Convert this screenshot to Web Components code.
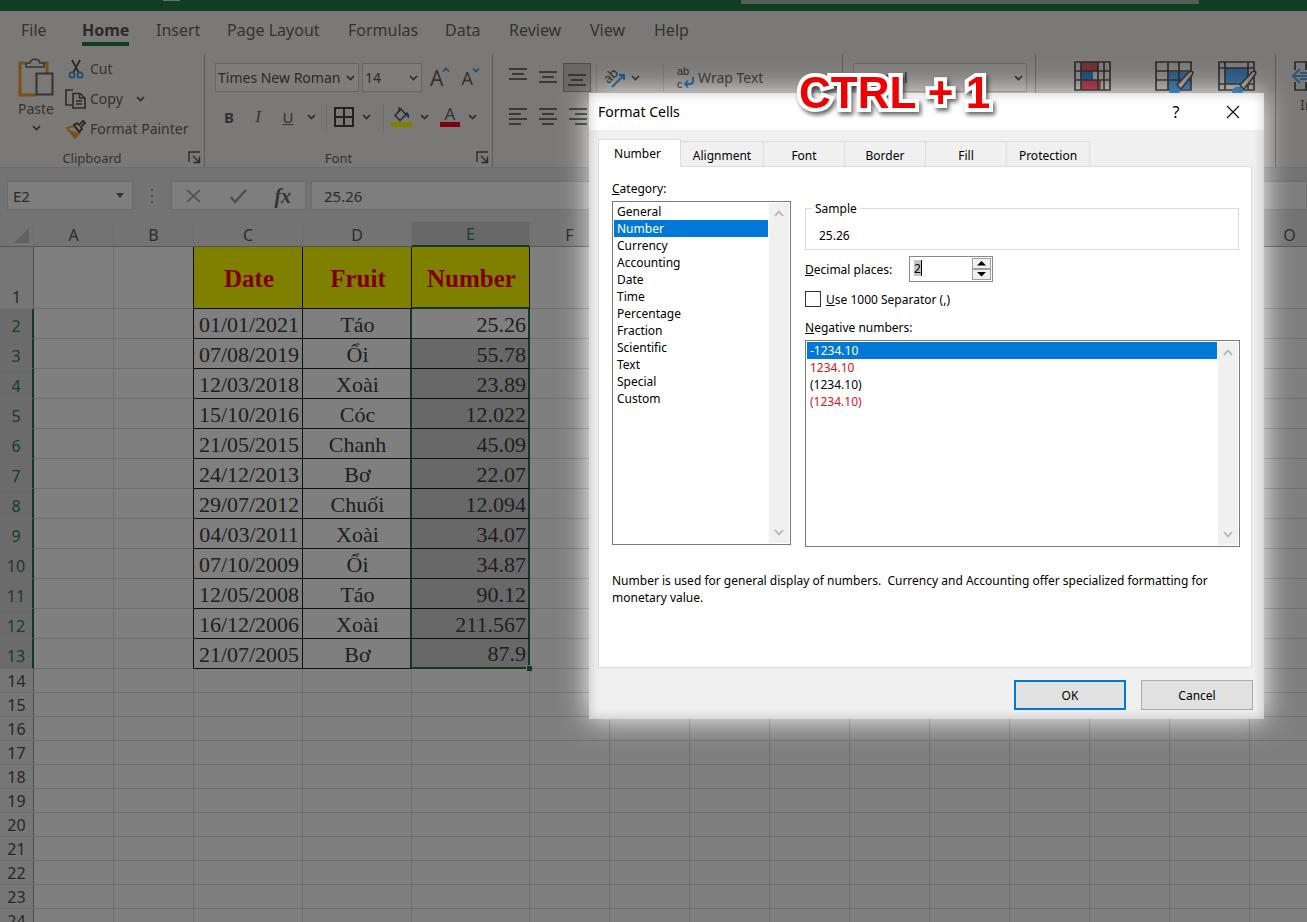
<!DOCTYPE html>
<html lang="en">
<head>
<meta charset="utf-8">
<title>Excel - Format Cells</title>
<style>
  html, body { margin: 0; height: 100%; overflow: hidden; }
  body { font-family: "Noto Sans", sans-serif; color: #555; background: #fff; }
</style>
</head>
<body>
<excel-app></excel-app>
<script>
const define = (name, html, setup) => {
  const tpl = document.createElement('template');
  tpl.innerHTML = html;
  customElements.define(name, class extends HTMLElement {
    constructor() {
      super();
      this.attachShadow({ mode: 'open' }).append(tpl.content.cloneNode(true));
    }
    connectedCallback() { if (setup) setup(this, this.shadowRoot); }
  });
};

/* ---------- icons ---------- */
const ICONS = {
  paste: [36, 40, '<path d="M7 5H2v32h16M24 5h5v10" fill="none" stroke="#f0a030" stroke-width="3"/><path d="M8 9V5h4c1-5 9-5 10 0h4v4z" fill="#f6f3f0" stroke="#666" stroke-width="1.6"/><rect x="18.500" y="15.500" width="16" height="21" fill="#f6f3f0" stroke="#666" stroke-width="2"/>'],
  cut: [16, 20, '<path d="M4 1l7 13M12 1L5 14" stroke="#555" stroke-width="1.8" fill="none"/><circle cx="4" cy="16" r="2.600" fill="none" stroke="#3a96dd" stroke-width="1.800"/><circle cx="12" cy="16" r="2.600" fill="none" stroke="#3a96dd" stroke-width="1.800"/>'],
  copy: [21, 20, '<path d="M7 16H1V1h7M8 4.500h7l5 4.500v10H8z" fill="none" stroke="#555" stroke-width="1.600"/><path d="M14.500 4.500V9H20M11 12h6M11 15h6" fill="none" stroke="#555" stroke-width="1.300"/>'],
  painter: [20, 20, '<path d="M1 9l7-2 6 6-5 6z" fill="none" stroke="#f0a030" stroke-width="2"/><path d="M3 11l9 3-3 4z" fill="#f0a030"/><path d="M8 6l3-2 2 2 4-4 2 2-4 4 1 2-3 3z" fill="none" stroke="#444" stroke-width="1.700"/>'],
  chev: [9, 6, '<path d="M1 1l3.500 3.500L8 1" fill="none" stroke="#555" stroke-width="1.700"/>'],
  launch: [13, 13, '<path d="M1 11V1h11M5 5l6 6M11.500 5.500v6h-6" fill="none" stroke="#555" stroke-width="1.400"/>'],
  borders: [20, 20, '<path d="M1 1h18v18H1zM10 1v18M1 10h18" fill="none" stroke="#444" stroke-width="2"/>'],
  fill: [21, 20, '<path d="M10 2L4 8.500l5 5 6-6-5-5zM8 5V0" fill="none" stroke="#555" stroke-width="1.500"/><path d="M15 5c3 1 4 4 2.500 6.500L15 8z" fill="#2b6cb0"/><path d="M0 15h21v5H0z" fill="#ffff00"/>'],
  orient: [22, 22, '<text x="0" y="13" font-size="13" fill="#555" transform="rotate(-45 7 11)" font-family="Noto Sans, sans-serif">ab</text><path d="M7 20L19 8M14 8h5v5" fill="none" stroke="#3a96dd" stroke-width="1.800"/>'],
  wrap: [19, 20, '<g font-size="11" fill="#555" font-family="Liberation Sans, sans-serif"><text x="1" y="7">ab</text><text x="1" y="20">c</text></g><path d="M17 9v4q0 3-3 3H9M12 12.500L9 16l3 3.500" fill="none" stroke="#3a96dd" stroke-width="1.800"/>'],
  cond: [37, 30, '<path d="M7 1h17v9H7zM7 19h20v10H7z" fill="#f0596a"/><path d="M7 10h12v9H7z" fill="#3a96dd"/><path d="M1 1h35v28H1zM7 1v28M24 1v28M30 1v28M1 10h35M1 19h35" fill="none" stroke="#555" stroke-width="1.700"/>'],
  fmt: [38, 33, '<path d="M13 11h23v17H13z" fill="#58aaf0"/><path d="M1 1h35v28H1zM13 1v28M24 1v28M1 10h35M1 19h35" fill="none" stroke="#555" stroke-width="1.700"/><path d="M14 33c0-6 4-9 8-7l12-14c2-2 5-1 3 2L26 29c-1 3-4 4-7 4z" fill="#58aaf0"/><path d="M22 24L34 11c3-2 5 0 3 3L26 28z" fill="#f6f3f0" stroke="#555" stroke-width="1.500"/>'],
  style: [38, 33, '<path d="M7 7h23v16H7z" fill="#58aaf0"/><path d="M1 1h35v28H1zM7 1v28M30 1v28M1 7h35M1 23h35" fill="none" stroke="#555" stroke-width="1.700"/><path d="M14 33c0-6 4-9 8-7l12-14c2-2 5-1 3 2L26 29c-1 3-4 4-7 4z" fill="#58aaf0"/><path d="M22 24L34 11c3-2 5 0 3 3L26 28z" fill="#f6f3f0" stroke="#555" stroke-width="1.500"/>'],
  insert: [34, 30, '<path d="M3 9V1h30v28H3v-8M14 1v8M14 21v8" fill="none" stroke="#555" stroke-width="1.700"/><path d="M0 15h30M8 8l-7 7 7 7M8 12h22M8 18h22" fill="none" stroke="#58aaf0" stroke-width="2"/>'],
  cancel: [16, 14, '<path d="M1 1l13 12M14 1L1 13" stroke="#9a9a9a" stroke-width="1.700"/>'],
  check: [17, 14, '<path d="M1 8l4 5L16 1" fill="none" stroke="#9a9a9a" stroke-width="2.200"/>'],
  tri: [8, 5, '<path d="M0 0h8L4 5z" fill="#666"/>'],
  triDown: [9, 5, '<path d="M0 0h9L4.500 4.500z" fill="#000"/>'],
  triUp: [9, 5, '<path d="M0 4.500h9L4.500 0z" fill="#000"/>'],
  sbUp: [10, 7, '<path d="M1 6l4-4.500L9 6" fill="none" stroke="#b4b4b4" stroke-width="1.800"/>'],
  sbDown: [10, 7, '<path d="M1 1l4 4.500L9 1" fill="none" stroke="#b4b4b4" stroke-width="1.800"/>'],
  close: [14, 14, '<path d="M1 1l12 12M13 1L1 13" stroke="#111" stroke-width="1.200"/>'],
  dots: [3, 14, '<path d="M0 0h2v2H0zM0 6h2v2H0zM0 12h2v2H0z" fill="#999"/>'],
  corner: [15, 15, '<path d="M15 0v15H0z" fill="#c4c4c4"/>'],
  caretUp: [6, 4, '<path d="M0 3.500L3 .500l3 3" fill="none" stroke="#3a96dd" stroke-width="1.700"/>'],
  caretDown: [6, 4, '<path d="M0 .500l3 3 3-3" fill="none" stroke="#3a96dd" stroke-width="1.700"/>']
};
const bars = (widths, align) => widths.map((w, i) => {
  const x = align === 'l' ? 0 : align === 'r' ? 18 - w : (18 - w) / 2;
  return `<path d="M${x} ${1 + i * 5}h${w}" stroke="#555" stroke-width="1.600"/>`;
}).join('');
ICONS.three = [18, 13, bars([18, 12, 18], 'c')];
ICONS.left = [18, 18, bars([18, 12, 18, 12], 'l')];
ICONS.center = [18, 18, bars([18, 12, 18, 12], 'c')];
ICONS.right = [18, 18, bars([18, 12, 18, 12], 'r')];

define('x-icon', `<style>:host{display:inline-flex;flex:none}svg{display:block;overflow:visible}</style><svg aria-hidden="true"></svg>`,
  (el, root) => {
    const [w, h, body] = ICONS[el.getAttribute('name')];
    const svg = root.querySelector('svg');
    svg.setAttribute('width', w);
    svg.setAttribute('height', h);
    svg.setAttribute('viewBox', `0 0 ${w} ${h}`);
    svg.innerHTML = body;
  });

/* ---------- title bar ---------- */
define('title-bar', `<style>
  :host{display:grid;grid-template-columns:163px 17px 561px 458px 1fr;height:11px;background:#247a4b;flex:none}
  .q{grid-column:2;height:1px;background:#cfe6d8}
  .s{grid-column:4;height:4px;background:#a0bcab}
</style><span class="q"></span><span class="s"></span>`);

/* ---------- ribbon tabs ---------- */
define('ribbon-tabs', `<style>
  :host{display:grid;grid-template-columns:61px 74px 71px 121px 97px 64px 81px 64px auto;height:39px;padding-left:21px;flex:none}
  ::slotted(a){justify-self:start;font-size:16px;line-height:20px;height:24px;margin-top:9px;color:#666;text-decoration:none;white-space:nowrap}
  ::slotted(a[aria-current]){font-weight:700;color:#555;border-bottom:4px solid #247a4b;height:22px}
</style><slot></slot>`);

/* ---------- ribbon group ---------- */
define('ribbon-group', `<style>
  :host{display:grid;grid-template-rows:94px 19px;box-sizing:border-box;height:113px;border-right:1px solid #b8b5b3;flex:none}
  .body{padding:0 10px;display:flex;min-width:0}
  .foot{display:grid;grid-template-columns:1fr auto;align-items:center;font-size:13px;line-height:18px;text-align:center;padding:0 3px 0 0;color:#666}
  .t{margin-right:4px}
</style><div class="body"><slot></slot></div><div class="foot"><span class="t"></span><slot name="launch"></slot></div>`,
  (el, root) => { root.querySelector('.t').textContent = el.getAttribute('label') || ''; });

/* ---------- drop-down box ---------- */
define('combo-box', `<style>
  :host{display:block;box-sizing:border-box;height:29px}
  label{position:relative;display:flex;align-items:center;height:100%;box-sizing:border-box;border:1px solid #cfccca;background:#fcfaf8}
  select{appearance:none;border:0;background:none;font:14px/20px "Noto Sans",sans-serif;color:#555;width:100%;padding:0 0 0 2px;outline:0}
  x-icon{position:absolute;right:3px}
</style><label><select></select><x-icon name="chev"></x-icon></label>`,
  (el, root) => {
    const s = root.querySelector('select');
    s.setAttribute('aria-label', el.getAttribute('label'));
    s.add(new Option(el.getAttribute('value')));
  });

/* ---------- ribbon ---------- */
define('excel-ribbon', `<style>
  :host{display:block;background:#f6f3f0;flex:none}
  .groups{display:flex;height:118px;padding-top:4px;box-sizing:border-box;border-bottom:1px solid #dedbd9}
  button{font:15px/20px "Noto Sans",sans-serif;color:#666;background:none;border:0;padding:0;display:flex;align-items:center;white-space:nowrap}
  .clip{width:205px}.font{width:288px}.align{width:350px}.num{width:193px}.styles{width:240px}
  .paste{flex-direction:column;width:52px;font-size:14px;gap:1px;padding-top:4px;justify-content:flex-start;box-sizing:border-box}
  .paste x-icon:last-child{margin-top:5px}
  .ins{width:auto;padding:7px 0 0 6px;align-items:flex-start}
  .ins x-icon{margin-bottom:3px}
  .ins span{margin-left:8px}
  .stack{display:grid;grid-template-rows:30px 30px 30px;align-items:center;font-size:14px;margin-left:3px}
  .stack button{font-size:14px;height:28px}
  .stack x-icon:first-child{width:21px;justify-content:center;margin-right:4px}
  .copy{gap:0}.copy x-icon:last-child{margin-left:13px}
  .rows{display:grid;grid-template-rows:29px 29px;row-gap:10px;padding-top:9px;align-items:center;align-content:start;box-sizing:border-box}
  .r{display:flex;align-items:center;height:29px}
  .sep{width:1px;height:28px;background:#dddad8}
  .g button{justify-content:center}
  .icon{width:30px}
  .pressed{width:28px;height:29px;border:1px solid #999;background:#d0cdcb;box-sizing:border-box;margin:0 1px 0 0}
  .big{font-size:21px;align-items:flex-start;gap:0}
  .small{font-size:18px}
  .bar{display:flex;flex-direction:column;align-items:center;width:20px;font-size:17px;line-height:16px;border-bottom:5px solid #ff0020;height:16px}
</style>
<ribbon-tabs>
  <a href="#file">File</a><a href="#home" aria-current="page">Home</a><a href="#insert">Insert</a><a href="#layout">Page Layout</a><a href="#formulas">Formulas</a><a href="#data">Data</a><a href="#review">Review</a><a href="#view">View</a><a href="#help">Help</a>
</ribbon-tabs>
<div class="groups">
  <ribbon-group class="clip" label="Clipboard">
    <button class="paste"><x-icon name="paste"></x-icon>Paste<x-icon name="chev"></x-icon></button>
    <div class="stack">
      <button><x-icon name="cut"></x-icon>Cut</button>
      <button class="copy"><x-icon name="copy"></x-icon>Copy<x-icon name="chev"></x-icon></button>
      <button><x-icon name="painter"></x-icon>Format Painter</button>
    </div>
    <x-icon slot="launch" name="launch"></x-icon>
  </ribbon-group>
  <ribbon-group class="font" label="Font">
    <div class="rows">
      <div class="r">
        <combo-box style="width:144px" label="Font" value="Times New Roman"></combo-box>
        <combo-box style="width:60px;margin-left:3px" label="Font size" value="14"></combo-box>
        <button class="big" aria-label="Increase font size" style="margin-left:8px">A<x-icon name="caretUp"></x-icon></button>
        <button class="big small" aria-label="Decrease font size" style="margin-left:12px">A<x-icon name="caretDown"></x-icon></button>
      </div>
      <div class="r g">
        <button style="width:28px"><b>B</b></button><button class="icon"><i style="font-family:'Liberation Serif',serif;font-size:17px">I</i></button><button class="icon"><u>U</u></button><button aria-label="Underline styles" style="width:16px"><x-icon name="chev"></x-icon></button>
        <span class="sep" style="margin:0 7px"></span>
        <button aria-label="Borders" style="width:20px"><x-icon name="borders"></x-icon></button><button aria-label="Border styles" style="width:25px"><x-icon name="chev"></x-icon></button>
        <span class="sep" style="margin:0 7px 0 4px"></span>
        <button aria-label="Fill colour" style="width:21px"><x-icon name="fill"></x-icon></button><button aria-label="Fill colours" style="width:24px"><x-icon name="chev"></x-icon></button>
        <button style="margin-left:4px"><span class="bar">A</span></button><button aria-label="Font colours" style="width:24px"><x-icon name="chev"></x-icon></button>
      </div>
    </div>
    <x-icon slot="launch" name="launch"></x-icon>
  </ribbon-group>
  <ribbon-group class="align">
    <div class="rows">
      <div class="r g">
        <button class="icon" aria-label="Top align" style="padding-bottom:6px"><x-icon name="three"></x-icon></button><button class="icon" aria-label="Middle align"><x-icon name="three"></x-icon></button><button class="pressed" aria-label="Bottom align" style="padding-top:6px"><x-icon name="three"></x-icon></button>
        <span class="sep" style="margin:0 8px 0 4px"></span>
        <button aria-label="Orientation"><x-icon name="orient"></x-icon></button><button aria-label="Orientation angles" style="width:16px"><x-icon name="chev"></x-icon></button>
        <span class="sep" style="margin:0 12px 0 20px"></span>
        <button style="gap:3px;font-size:14px"><x-icon name="wrap"></x-icon>Wrap Text</button>
      </div>
      <div class="r g">
        <button class="icon" aria-label="Align left"><x-icon name="left"></x-icon></button><button class="icon" aria-label="Centre"><x-icon name="center"></x-icon></button><button class="icon" aria-label="Align right"><x-icon name="right"></x-icon></button>
      </div>
    </div>
  </ribbon-group>
  <ribbon-group class="num">
    <div class="rows"><combo-box style="width:174px" label="Number format" value="General"></combo-box></div>
  </ribbon-group>
  <ribbon-group class="styles">
    <div class="r" style="align-items:flex-start;padding:7px 0 0 28px">
      <button aria-label="Conditional Formatting"><x-icon name="cond"></x-icon></button>
      <button aria-label="Format as Table" style="margin-left:44px"><x-icon name="fmt"></x-icon></button>
      <button aria-label="Cell Styles" style="margin-left:25px"><x-icon name="style"></x-icon></button>
    </div>
  </ribbon-group>
  <ribbon-group class="cells">
    <button class="paste ins"><x-icon name="insert"></x-icon><span>Insert</span></button>
  </ribbon-group>
</div>`);

/* ---------- formula bar ---------- */
define('formula-bar', `<style>
  :host{display:flex;height:54px;box-sizing:border-box;padding:13px 0 12px 7px;background:#e6e6e6;align-items:stretch;flex:none}
  input{font:15px/20px "Noto Sans",sans-serif;color:#555;border:0;background:none;padding:0;outline:0;min-width:0;width:100%}
  label,.fx{display:flex;align-items:center;background:#fcfcfc;border:1px solid #d6d6d6;box-sizing:border-box}
  .name{width:126px;padding:0 8px 0 5px}
  .dots{width:38px;display:flex;align-items:center;justify-content:center}
  .fx{width:135px;justify-content:space-around;margin-right:5px}
  .fx button{border:0;background:none;padding:0;display:flex;color:#666;font:italic 700 20px/24px "Liberation Serif",serif}
  .val{flex:1;padding-left:12px}
</style>
<label class="name"><input aria-label="Name box" value="E2"><x-icon name="tri"></x-icon></label>
<span class="dots"><x-icon name="dots"></x-icon></span>
<div class="fx"><button aria-label="Cancel"><x-icon name="cancel"></x-icon></button><button aria-label="Enter"><x-icon name="check"></x-icon></button><button>fx</button></div>
<label class="val"><input aria-label="Formula" value="25.26"></label>`);

/* ---------- sheet ---------- */
define('sheet-grid', `<style>
  :host{display:block;flex:1;min-height:0;overflow:hidden;background:#fff}
  table{border-collapse:separate;border-spacing:0;table-layout:fixed;width:1330px}
  th,td{padding:0;box-sizing:border-box;border-right:1px solid #dcdcdc;border-bottom:1px solid #dcdcdc;font-weight:400;overflow:hidden;white-space:nowrap}
  thead th{height:25px;background:#e6e6e6;font-size:16px;line-height:22px;padding-top:1px;border-bottom-color:#a8a8a8;color:#585858}
  thead th.on{background:#d0d0d0;color:#2f7d55;border-bottom:2px solid #217346}
  thead th:first-child{text-align:right;vertical-align:bottom}
  thead x-icon{margin:0 4px 3px 0;vertical-align:bottom}
  tbody th{background:#ececec;font-size:16px;line-height:22px;color:#505050;border-right-color:#a8a8a8;vertical-align:bottom}
  tbody th.on{background:#d6d6d6;color:#2f7d55;border-right:2px solid #217346}
  tr{height:24px}
  tr.h{height:62px}
  tr.d{height:30px}
  tr.d th{line-height:24px}
  .x{border-color:#1c1c1c;font-family:"Liberation Serif",serif;font-size:22px;line-height:26px;text-align:center;color:#404040;padding:2px 0 0 2px}
  .lb{border-right-color:#1c1c1c}
  .hd{background:#ff0;color:#f00;font-weight:700;font-size:25px;line-height:28px}
  .e{text-align:right;padding-right:2px;border-right:2px solid #217346;background:#d0d0d0}
  .e.first{background:#fff}
  .ge{border-right:2px solid #217346}
  .hd.e{background:#ff0;border-right:1px solid #1c1c1c;border-bottom:2px solid #217346;text-align:center;padding:3px 0 0 2px}
  .last.e{border-bottom:2px solid #217346;position:relative;overflow:visible}
  .last.e::after{content:"";position:absolute;right:-4px;bottom:-4px;width:5px;height:5px;background:#217346;border:1px solid #fff;border-width:1px 0 0 1px}
</style><table aria-label="Sheet"><colgroup></colgroup><thead><tr></tr></thead><tbody></tbody></table>`,
  (el, root) => {
    const rows = [['Date', 'Fruit', 'Number'], ['01/01/2021', 'Táo', '25.26'], ['07/08/2019', 'Ổi', '55.78'], ['12/03/2018', 'Xoài', '23.89'],
      ['15/10/2016', 'Cóc', '12.022'], ['21/05/2015', 'Chanh', '45.09'], ['24/12/2013', 'Bơ', '22.07'], ['29/07/2012', 'Chuối', '12.094'],
      ['04/03/2011', 'Xoài', '34.07'], ['07/10/2009', 'Ổi', '34.87'], ['12/05/2008', 'Táo', '90.12'], ['16/12/2006', 'Xoài', '211.567'], ['21/07/2005', 'Bơ', '87.9']];
    const widths = { A: 80, B: 80, C: 109, D: 109, E: 118 };
    const cols = [...'ABCDEFGHIJKLMNO'];
    root.querySelector('colgroup').innerHTML = '<col style="width:34px">' + cols.map(c => `<col style="width:${widths[c] || 80}px">`).join('');
    root.querySelector('thead tr').innerHTML = '<th><x-icon name="corner"></x-icon></th>' +
      cols.map(c => `<th scope="col"${c === 'E' ? ' class="on"' : ''}>${c > 'F' && c < 'O' ? '' : c}</th>`).join('');
    let html = '';
    for (let r = 1; r <= 24; r++) {
      const data = rows[r - 1];
      html += `<tr class="${r === 1 ? 'h' : data ? 'd' : ''}"><th scope="row"${data && r > 1 ? ' class="on"' : ''}>${r}</th>`;
      cols.forEach((c, i) => {
        const k = i - 2;
        const cls = [];
        if (data && c === 'B') cls.push('lb');
        if (data && k >= 0 && k < 3) {
          cls.push('x');
          if (r === 1) cls.push('hd');
          if (c === 'D' && r > 1) cls.push('ge');
          if (c === 'E') cls.push('e');
          if (r === 2) cls.push('first');
          if (r === 13) cls.push('last');
        }
        html += `<td class="${cls.join(' ')}">${data && data[k] || ''}</td>`;
      });
      html += '</tr>';
    }
    root.querySelector('tbody').innerHTML = html;
  });

/* ---------- list box with its scroll bar ---------- */
define('list-box', `<style>
  :host{display:flex;box-sizing:border-box;border:1px solid #7a7a7a;padding:1px;background:#fff}
  select{appearance:none;flex:1;min-width:0;border:0;outline:0;padding:0;margin:0;font:12px/17px "Noto Sans",sans-serif;color:#000;background:#fff;overflow:hidden;scrollbar-width:none;border-radius:0}
  option{padding:0 0 0 3px;height:17px;min-height:17px;line-height:17px;box-sizing:border-box}
  option.red{color:#e01010}
  option:checked{background:#0078d7 linear-gradient(#0078d7,#0078d7);color:#fff;-webkit-text-fill-color:#fff}
  .bar{width:20px;margin-left:1px;background:#f0f0f0;display:flex;flex-direction:column;justify-content:space-between;align-items:center;padding:7px 0;box-sizing:border-box}
</style><select></select><div class="bar"><x-icon name="sbUp"></x-icon><x-icon name="sbDown"></x-icon></div>`,
  (el, root) => {
    const s = root.querySelector('select');
    const items = el.getAttribute('items').split('|');
    s.size = items.length;
    s.setAttribute('aria-label', el.getAttribute('label'));
    items.forEach(t => {
      const red = t[0] === '!';
      const o = new Option(red ? t.slice(1) : t);
      if (red) o.className = 'red';
      s.add(o);
    });
    s.selectedIndex = +el.getAttribute('selected');
  });

/* ---------- Format Cells dialog ---------- */
define('format-dialog', `<style>
  :host{display:block;position:relative;width:675px;background:#f0f0f0;color:#000;font-size:12px;line-height:17px}
  :host::after{content:"";position:absolute;inset:0;box-shadow:inset 0 0 12px rgba(0,0,0,.22);pointer-events:none}
  header{display:flex;align-items:center;height:37px;background:#fff;padding:0 24px 0 9px;font-size:14px}
  header h2{flex:1;font:inherit;margin:0}
  header button{border:0;background:none;padding:0;display:flex;justify-content:center;width:14px;font:16px/20px "Noto Sans",sans-serif;color:#000}
  header button+button{margin-left:43px}
  nav{display:flex;align-items:flex-end;height:36px;padding:0 0 0 9px;box-sizing:border-box;position:relative}
  nav button{font:12px/17px "Noto Sans",sans-serif;color:#000;height:25px;border:1px solid #dcdcdc;border-left:0;border-bottom:0;background:#f0f0f0;padding:2px 0 0;width:81px}
  nav button.on{height:28px;width:83px;background:#fff;border-left:1px solid #dcdcdc;margin-bottom:-1px;padding:0 4px 0 0}
  nav button.w{width:83px}
  main{margin:0 12px 0 9px;background:#fff;border:1px solid #dcdcdc;height:502px;padding:13px 11px 0 13px;box-sizing:border-box}
  .cols{display:grid;grid-template-columns:179px 1fr;column-gap:14px}
  .cols label,.cols .lab{display:block}
  .cat{height:344px;margin-top:4px}
  fieldset{margin:20px 1px 0 0;border:1px solid #dcdcdc;height:50px;box-sizing:border-box;padding:10px 13px 0;min-width:0}
  legend{padding:0 3px;margin-left:-7px;line-height:17px}
  .dec{display:flex;align-items:center;height:26px;margin-top:6px}
  .dec label{width:104px}
  .spin{display:flex;width:84px;height:26px;border:1px solid #8a8a8a;box-sizing:border-box;padding:1px;align-items:stretch}
  .spin input{border:0;outline:0;padding:0 0 2px 3px;flex:1;min-width:0;font:12px/17px "Noto Sans",sans-serif;color:#000;
    background:linear-gradient(#000,#000) 10px 2px/1px 16px no-repeat,linear-gradient(#c4c4c4,#c4c4c4) 3px 2px/7px 16px no-repeat}
  .spin div{display:grid;grid-template-rows:1fr 1fr;width:19px}
  .spin div button{border:1px solid #a0a0a0;background:#f0f0f0;padding:0;display:flex;align-items:center;justify-content:center}
  .sep{display:flex!important;align-items:center;gap:5px;margin-top:8px;height:18px}
  .sep input{appearance:none;width:16px;height:16px;border:1px solid #333;margin:0;background:#fff}
  .neg{margin-top:11px}
  .neglist{height:207px;margin-top:4px}
  p{margin:25px 0 0;white-space:pre-wrap}
  footer{display:flex;justify-content:flex-end;gap:15px;padding:12px 11px 9px 0}
  footer button{width:112px;height:30px;border:1px solid #adadad;background:#e1e1e1;font:12px/17px "Noto Sans",sans-serif;color:#000;padding:0}
  footer .ok{border:2px solid #0078d7}
</style>
<header><h2>Format Cells</h2><button aria-label="Help">?</button><button aria-label="Close"><x-icon name="close"></x-icon></button></header>
<nav><button class="on">Number</button><button class="w">Alignment</button><button>Font</button><button>Border</button><button>Fill</button><button class="w">Protection</button></nav>
<main>
  <div class="cols">
    <div>
      <span class="lab"><u>C</u>ategory:</span>
      <list-box class="cat" label="Category" selected="1" items="General|Number|Currency|Accounting|Date|Time|Percentage|Fraction|Scientific|Text|Special|Custom"></list-box>
    </div>
    <div>
      <fieldset><legend>Sample</legend>25.26</fieldset>
      <div class="dec"><label for="dec"><u>D</u>ecimal places:</label>
        <span class="spin"><input id="dec" value="2"><div><button aria-label="More"><x-icon name="triUp"></x-icon></button><button aria-label="Fewer"><x-icon name="triDown"></x-icon></button></div></span></div>
      <label class="sep"><input type="checkbox"><span><u>U</u>se 1000 Separator (,)</span></label>
      <span class="lab neg"><u>N</u>egative numbers:</span>
      <list-box class="neglist" label="Negative numbers" selected="0" items="-1234.10|!1234.10|(1234.10)|!(1234.10)"></list-box>
    </div>
  </div>
  <p>Number is used for general display of numbers.  Currency and Accounting offer specialized formatting for monetary value.</p>
</main>
<footer><button class="ok">OK</button><button>Cancel</button></footer>`);

/* ---------- soft spotlight: dims everything around what it wraps ---------- */
define('spot-light', `<style>
  :host{display:block}
  .dim{position:absolute;inset:-1400px;box-shadow:inset 0 0 28px 1400px rgba(0,0,0,.5);pointer-events:none}
</style><div class="dim"></div><slot></slot>`);

define('shortcut-caption', `<style>
  :host{display:block;font:700 44px/48px "Liberation Sans",sans-serif;color:#f00000;-webkit-text-stroke:8px #fff;paint-order:stroke fill;white-space:nowrap;filter:drop-shadow(2px 3px 2px rgba(0,0,0,.6))}
</style><slot></slot>`);

define('excel-app', `<style>
  :host{display:flex;flex-direction:column;height:100vh;position:relative;overflow:hidden}
  spot-light{position:absolute;left:589px;top:93px}
  shortcut-caption{position:absolute;left:799px;top:69px}
</style>
<title-bar></title-bar>
<excel-ribbon></excel-ribbon>
<formula-bar></formula-bar>
<sheet-grid></sheet-grid>
<spot-light><format-dialog></format-dialog></spot-light>
<shortcut-caption>CTRL + 1</shortcut-caption>`);
</script>
</body>
</html>
